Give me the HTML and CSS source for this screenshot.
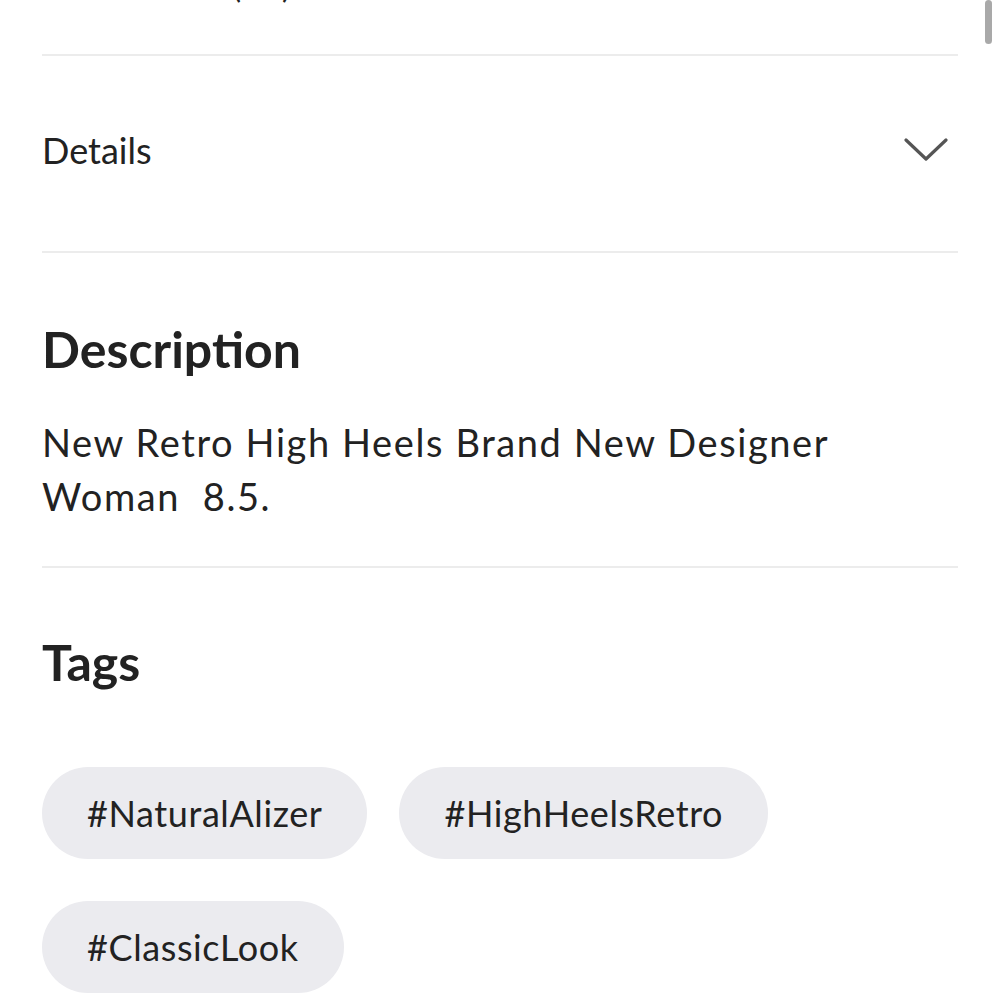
FILE: index.html
```html
<!DOCTYPE html>
<html lang="en">
<head>
  <meta charset="UTF-8">
  <meta name="viewport" content="width=device-width,initial-scale=1.0">
  <title>Listing details</title>
  <link rel="stylesheet" href="styles.css">
</head>
<body>

  <!-- kaydırma çubuğu -->
  <div class="scroll-thumb"></div>

  <main class="listing">
    <!-- üstte yarım kalan satır -->
    <div class="row row-cut">
      <span class="cut-text">Size &nbsp; <b>(US)</b></span>
    </div>

    <div class="row row-details">
      <span>Details</span>
      <svg class="chevron" width="44" height="26" viewBox="0 0 44 26">
        <polyline points="2,3 22,22 42,3" fill="none" stroke="#555" stroke-width="3.2" stroke-linecap="round" stroke-linejoin="round"/>
      </svg>
    </div>

    <section class="block block-desc">
      <h2>Description</h2>
      <p>New Retro High Heels Brand New Designer Woman&nbsp; 8.5.</p>
    </section>

    <section class="block block-tags">
      <h2>Tags</h2>
      <div class="tags">
        <span class="tag">#NaturalAlizer</span>
        <span class="tag">#HighHeelsRetro</span>
        <span class="tag">#ClassicLook</span>
      </div>
    </section>
  </main>

</body>
</html>
```

FILE: styles.css
```css
:root {
  --text: #222222;
  --line: #ececec;
  --chip: #ebebef;
}

* {
  margin: 0;
  padding: 0;
  box-sizing: border-box;
}

body {
  font-family: Lato, "Open Sans", sans-serif;
  background: #fff;
  color: var(--text);
  overflow: hidden;
}

.scroll-thumb {
  position: fixed;
  top: 0;
  right: 8px;
  width: 7px;
  height: 44px;
  border-radius: 4px;
  background: #a9a9a9;
}

.listing {
  margin: 0 42px;
}

.row {
  border-bottom: 2px solid var(--line);
}

.row-cut {
  height: 56px;
  overflow: hidden;
}
.cut-text {
  display: block;
  margin-top: -34px;
  padding-left: 110px;
  font-size: 32px;
  line-height: 40px;
  color: #bbb;
}
.cut-text b {
  font-weight: 400;
  color: #222;
}

.row-details {
  height: 197px;
  display: flex;
  align-items: center;
  justify-content: space-between;
  font-size: 36px;
  padding-right: 10px;
  padding-bottom: 8px;
}

.block {
  padding-top: 66px;
}

.block h2 {
  font-size: 50px;
  font-weight: 700;
  line-height: 60px;
}

.block-desc {
  padding-bottom: 43px;
  border-bottom: 2px solid var(--line);
}
.block-desc p {
  max-width: 840px;
  margin-top: 36px;
  font-size: 38px;
  letter-spacing: 1.6px;
  line-height: 54px;
}

.block-tags {
  padding-top: 64px;
}

.tags {
  margin-top: 75px;
  display: flex;
  flex-wrap: wrap;
  column-gap: 32px;
  row-gap: 42px;
}

.tag {
  height: 92px;
  display: flex;
  align-items: center;
  padding: 0 45px;
  border-radius: 46px;
  background: var(--chip);
  font-size: 36px;
  letter-spacing: 0.6px;
}
```
